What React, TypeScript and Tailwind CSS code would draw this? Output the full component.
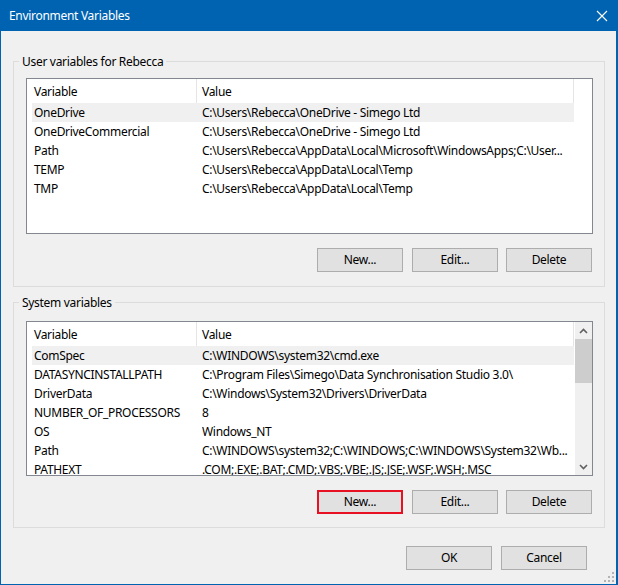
import React from "react";

type Row = { name: string; value: string; selected?: boolean };

const userRows: Row[] = [
  { name: "OneDrive", value: "C:\\Users\\Rebecca\\OneDrive - Simego Ltd", selected: true },
  { name: "OneDriveCommercial", value: "C:\\Users\\Rebecca\\OneDrive - Simego Ltd" },
  { name: "Path", value: "C:\\Users\\Rebecca\\AppData\\Local\\Microsoft\\WindowsApps;C:\\User..." },
  { name: "TEMP", value: "C:\\Users\\Rebecca\\AppData\\Local\\Temp" },
  { name: "TMP", value: "C:\\Users\\Rebecca\\AppData\\Local\\Temp" },
];

const sysRows: Row[] = [
  { name: "ComSpec", value: "C:\\WINDOWS\\system32\\cmd.exe", selected: true },
  { name: "DATASYNCINSTALLPATH", value: "C:\\Program Files\\Simego\\Data Synchronisation Studio 3.0\\" },
  { name: "DriverData", value: "C:\\Windows\\System32\\Drivers\\DriverData" },
  { name: "NUMBER_OF_PROCESSORS", value: "8" },
  { name: "OS", value: "Windows_NT" },
  { name: "Path", value: "C:\\WINDOWS\\system32;C:\\WINDOWS;C:\\WINDOWS\\System32\\Wb..." },
  { name: "PATHEXT", value: ".COM;.EXE;.BAT;.CMD;.VBS;.VBE;.JS;.JSE;.WSF;.WSH;.MSC" },
];

function Btn({ label, red }: { label: string; red?: boolean }) {
  return (
    <div
      className={
        red
          ? "w-[86px] h-[24px] border-2 border-[#e81123] bg-[#e1e1e1] flex items-center justify-center shrink-0"
          : "w-[86px] h-[24px] border border-[#adadad] bg-[#e1e1e1] flex items-center justify-center shrink-0"
      }
    >
      {label}
    </div>
  );
}

function Chevron({ up }: { up?: boolean }) {
  return (
    <svg width="9" height="6" viewBox="0 0 9 6" className={up ? "" : "rotate-180"}>
      <path d="M1 5 L4.5 1.5 L8 5" stroke="#606060" strokeWidth="1.6" fill="none" />
    </svg>
  );
}

function ListBox({ rows, h, scroll }: { rows: Row[]; h: string; scroll?: boolean }) {
  return (
    <div className={`border border-[#828790] bg-white flex overflow-hidden ${h}`}>
      <div className="flex-1 flex flex-col min-w-0 overflow-hidden">
        <div className="h-[24px] flex shrink-0">
          <div className="w-[170px] border-r border-[#e5e5e5] pl-[7px] pt-[1px] flex items-center shrink-0">Variable</div>
          <div className="w-[377px] border-r border-[#e5e5e5] pl-[5px] pt-[1px] flex items-center shrink-0">Value</div>
        </div>
        {rows.map((r) => (
          <div key={r.name} className="h-[19px] flex pl-[5px] shrink-0">
            <div className={`w-[542px] flex leading-[18px] pt-[1px] ${r.selected ? "bg-[#f0f0f0]" : ""}`}>
              <div className="w-[170px] pl-[2px] whitespace-nowrap overflow-hidden shrink-0">{r.name}</div>
              <div className="flex-1 whitespace-nowrap overflow-hidden">{r.value}</div>
            </div>
          </div>
        ))}
      </div>
      {scroll && (
        <div className="w-[17px] bg-[#f0f0f0] flex flex-col shrink-0">
          <div className="h-[17px] flex items-center justify-center">
            <Chevron up />
          </div>
          <div className="h-[44px] bg-[#cdcdcd]" />
          <div className="flex-1" />
          <div className="h-[17px] flex items-center justify-center">
            <Chevron />
          </div>
        </div>
      )}
    </div>
  );
}

function Group({
  label,
  children,
  pt,
}: {
  label: string;
  children: React.ReactNode;
  pt: string;
}) {
  return (
    <div className={`relative border border-[#dcdcdc] ml-[12px] mr-[11px] pl-[12px] pr-[11px] ${pt}`}>
      <span className="absolute -top-[7px] left-[5px] px-[3px] bg-[#f0f0f0] leading-[14px]">{label}</span>
      {children}
    </div>
  );
}

export default function App() {
  return (
    <div className="w-[618px] h-[585px] bg-[#0063b1] flex flex-col pl-[1px] pr-[2px] pb-[1px] font-['Noto_Sans',sans-serif] text-[12px] tracking-[-0.3px] text-black">
      <div className="h-[31px] -ml-[1px] -mr-[2px] flex items-center pl-[9px] pt-[1px] text-white relative shrink-0">
        <span>Environment Variables</span>
        <svg className="absolute left-[596px] top-[10px]" width="12" height="12" viewBox="0 0 12 12">
          <path d="M1 1 L11 11 M11 1 L1 11" stroke="white" strokeWidth="1.1" />
        </svg>
      </div>
      <div className="flex-1 bg-[#f0f0f0] flex flex-col relative">
        <div className="mt-[30px]">
          <Group label="User variables for Rebecca" pt="pt-[16px] pb-[14px]">
            <ListBox rows={userRows} h="h-[156px]" />
            <div className="flex justify-end mt-[14px] pr-[1px]">
              <Btn label="New..." />
              <div className="w-[9px]" />
              <Btn label="Edit..." />
              <div className="w-[8px]" />
              <Btn label="Delete" />
            </div>
          </Group>
        </div>
        <div className="mt-[15px]">
          <Group label="System variables" pt="pt-[18px] pb-[13px]">
            <ListBox rows={sysRows} h="h-[155px]" scroll />
            <div className="flex justify-end mt-[14px] pr-[1px]">
              <Btn label="New..." red />
              <div className="w-[9px]" />
              <Btn label="Edit..." />
              <div className="w-[8px]" />
              <Btn label="Delete" />
            </div>
          </Group>
        </div>
        <div className="flex justify-end mt-[18px] pr-[29px]">
          <Btn label="OK" />
          <div className="w-[9px]" />
          <Btn label="Cancel" />
        </div>
        <svg className="absolute right-[1px] bottom-[1px]" width="11" height="11" viewBox="0 0 11 11">
          <rect x="8" y="0" width="2" height="2" fill="#b4b4b4" />
          <rect x="4" y="4" width="2" height="2" fill="#b4b4b4" />
          <rect x="8" y="4" width="2" height="2" fill="#b4b4b4" />
          <rect x="0" y="8" width="2" height="2" fill="#b4b4b4" />
          <rect x="4" y="8" width="2" height="2" fill="#b4b4b4" />
          <rect x="8" y="8" width="2" height="2" fill="#b4b4b4" />
        </svg>
      </div>
    </div>
  );
}
